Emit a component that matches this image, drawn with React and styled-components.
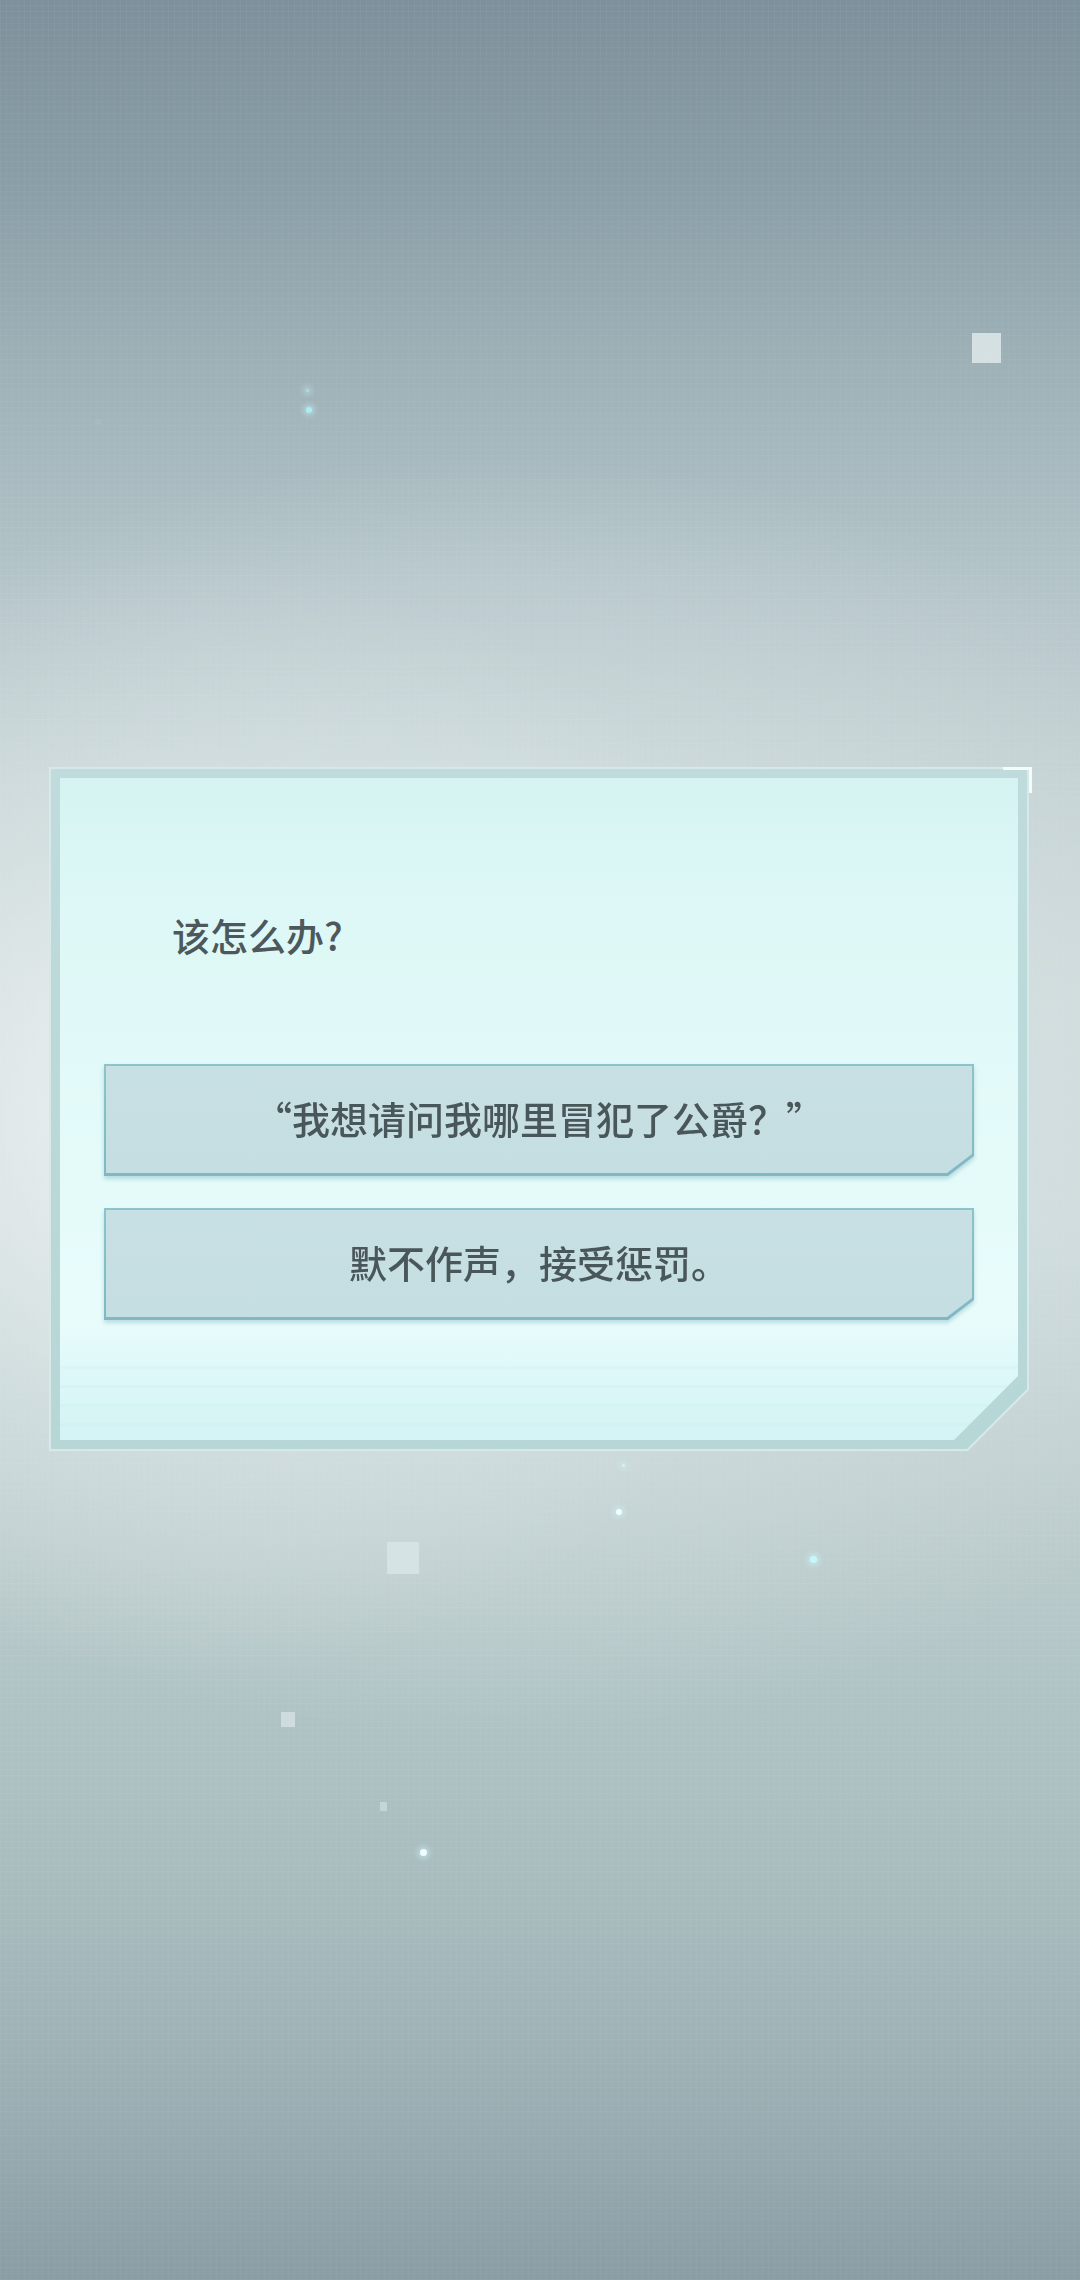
import React from "react";
import styled, { createGlobalStyle } from "styled-components";

const GlobalStyle = createGlobalStyle`
  html, body {
    margin: 0;
    padding: 0;
    background: #8fa3aa;
  }
  * {
    box-sizing: border-box;
  }
`;

const choices = [
  { id: "ask", label: "“我想请问我哪里冒犯了公爵？”" },
  { id: "silent", label: "默不作声，接受惩罚。" },
];

// floating particles around the dialog
const specks = [
  { x: 972, y: 333, w: 29, h: 30, tone: "rgba(222, 233, 234, 0.85)" },
  { x: 387, y: 1542, w: 32, h: 32, tone: "rgba(216, 229, 230, 0.85)" },
  { x: 281, y: 1712, w: 14, h: 15, tone: "rgba(214, 226, 227, 0.8)" },
  { x: 380, y: 1802, w: 7, h: 9, tone: "rgba(205, 220, 222, 0.75)" },
  { x: 95, y: 419, w: 6, h: 6, tone: "rgba(170, 188, 194, 0.7)" },
];

const sparks = [
  { x: 306, y: 407, size: 6, tone: "#a8eef4" },
  { x: 306, y: 389, size: 3, tone: "#a6dfe6" },
  { x: 616, y: 1509, size: 6, tone: "#f2fdfd" },
  { x: 622, y: 1464, size: 3, tone: "#dcefef" },
  { x: 810, y: 1556, size: 7, tone: "#c4f8fa" },
  { x: 420, y: 1849, size: 7, tone: "#eefcfd" },
];

const App = () => {
  return (
    <>
      <GlobalStyle />
      <Screen lang="zh-CN">
        {specks.map((s, i) => (
          <Speck
            key={`speck-${i}`}
            style={{ left: s.x, top: s.y, width: s.w, height: s.h, background: s.tone }}
          />
        ))}
        {sparks.map((s, i) => (
          <Spark
            key={`spark-${i}`}
            style={{ left: s.x, top: s.y, width: s.size, height: s.size, background: s.tone }}
          />
        ))}

        <Dialog>
          <FrameEdge>
            <FrameBand>
              <Panel>
                <Prompt>该怎么办?</Prompt>
                <ChoiceList>
                  {choices.map((choice) => (
                    <ChoiceShadow key={choice.id}>
                      <ChoiceEdge>
                        <ChoiceFace>{choice.label}</ChoiceFace>
                      </ChoiceEdge>
                    </ChoiceShadow>
                  ))}
                </ChoiceList>
              </Panel>
            </FrameBand>
          </FrameEdge>
          <CornerMark />
        </Dialog>
      </Screen>
    </>
  );
};

const cut = (size) =>
  `polygon(0 0, 100% 0, 100% calc(100% - ${size}px), calc(100% - ${size}px) 100%, 0 100%)`;

const Screen = styled.div`
  position: relative;
  width: 1080px;
  height: 2280px;
  overflow: hidden;
  padding: 767px 0 0 49px;
  font-family: "Noto Sans CJK SC", "Noto Sans", sans-serif;
  background:
    repeating-linear-gradient(90deg, rgba(255, 255, 255, 0.03) 0 1px, transparent 1px 6px),
    repeating-linear-gradient(0deg, rgba(255, 255, 255, 0.03) 0 1px, transparent 1px 6px),
    radial-gradient(ellipse 620px 560px at 18% 49%, rgba(242, 246, 246, 0.75), rgba(225, 234, 235, 0.3) 55%, rgba(200, 215, 217, 0) 100%),
    radial-gradient(ellipse 900px 640px at 45% 48%, rgba(236, 243, 243, 0.8), rgba(220, 232, 233, 0.4) 55%, rgba(200, 215, 217, 0) 100%),
    linear-gradient(
      180deg,
      #7d919c 0%,
      #8a9ea7 8%,
      #9db1b7 16%,
      #b2c3c7 25%,
      #c3d0d2 34%,
      #cdd8d9 44%,
      #ccd8d9 54%,
      #c0cfd0 64%,
      #b1c4c5 74%,
      #a7bbbd 84%,
      #9db1b5 91%,
      #8a9da5 100%
    );
`;

const Speck = styled.span`
  position: absolute;
  display: block;
`;

const Spark = styled.span`
  position: absolute;
  display: block;
  border-radius: 50%;
  box-shadow: 0 0 6px 2px rgba(210, 252, 253, 0.6);
`;

const Dialog = styled.section`
  position: relative;
  width: 980px;
  height: 684px;
`;

const FrameEdge = styled.div`
  height: 100%;
  padding: 2px;
  background: #d6e8e8;
  clip-path: ${cut(61)};
`;

const FrameBand = styled.div`
  height: 100%;
  padding: 9px;
  background: linear-gradient(180deg, #bfdbdb 0%, #bad8d8 60%, #b7d6d6 100%);
  clip-path: ${cut(60)};
`;

const Panel = styled.div`
  position: relative;
  display: flex;
  flex-direction: column;
  height: 100%;
  padding: 134px 44px 0 44px;
  clip-path: ${cut(64)};
  background: linear-gradient(
    180deg,
    #d4f3f1 0%,
    #dbf7f5 12%,
    #e1f9f8 40%,
    #e4fbfa 62%,
    #e9fcfc 82%,
    #ddf8f8 90%,
    #d4f3f4 100%
  );

  &::after {
    content: "";
    position: absolute;
    left: 0;
    right: 0;
    bottom: 0;
    height: 90px;
    background: repeating-linear-gradient(
      180deg,
      rgba(255, 255, 255, 0) 0 16px,
      rgba(180, 222, 226, 0.12) 16px 19px
    );
    pointer-events: none;
  }
`;

const Prompt = styled.h2`
  margin: 0 0 0 68px;
  font-size: 38px;
  line-height: 46px;
  font-weight: 500;
  color: #4c585b;
`;

const ChoiceList = styled.div`
  display: flex;
  flex-direction: column;
  gap: 32px;
  margin-top: 106px;
`;

const ChoiceShadow = styled.div`
  filter: drop-shadow(0 3px 2px rgba(96, 160, 170, 0.35));
`;

const ChoiceEdge = styled.div`
  height: 112px;
  padding: 2px 2px 3px 2px;
  background: linear-gradient(180deg, #8cc3cc 0%, #7fb8c3 100%);
  clip-path: polygon(0 0, 100% 0, 100% calc(100% - 20px), calc(100% - 26px) 100%, 0 100%);
`;

const ChoiceFace = styled.button`
  display: flex;
  align-items: center;
  justify-content: center;
  width: 100%;
  height: 100%;
  padding: 0 0 4px 0;
  border: none;
  cursor: pointer;
  font-family: inherit;
  font-size: 38px;
  font-weight: 500;
  color: #4a575a;
  background: linear-gradient(180deg, #c8e0e3 0%, #c5dee1 100%);
  clip-path: polygon(0 0, 100% 0, 100% calc(100% - 19px), calc(100% - 25px) 100%, 0 100%);
`;

const CornerMark = styled.span`
  position: absolute;
  top: 0;
  right: -3px;
  width: 29px;
  height: 26px;
  border-top: 3px solid #f3fbfb;
  border-right: 3px solid #f3fbfb;
`;

export default App;
